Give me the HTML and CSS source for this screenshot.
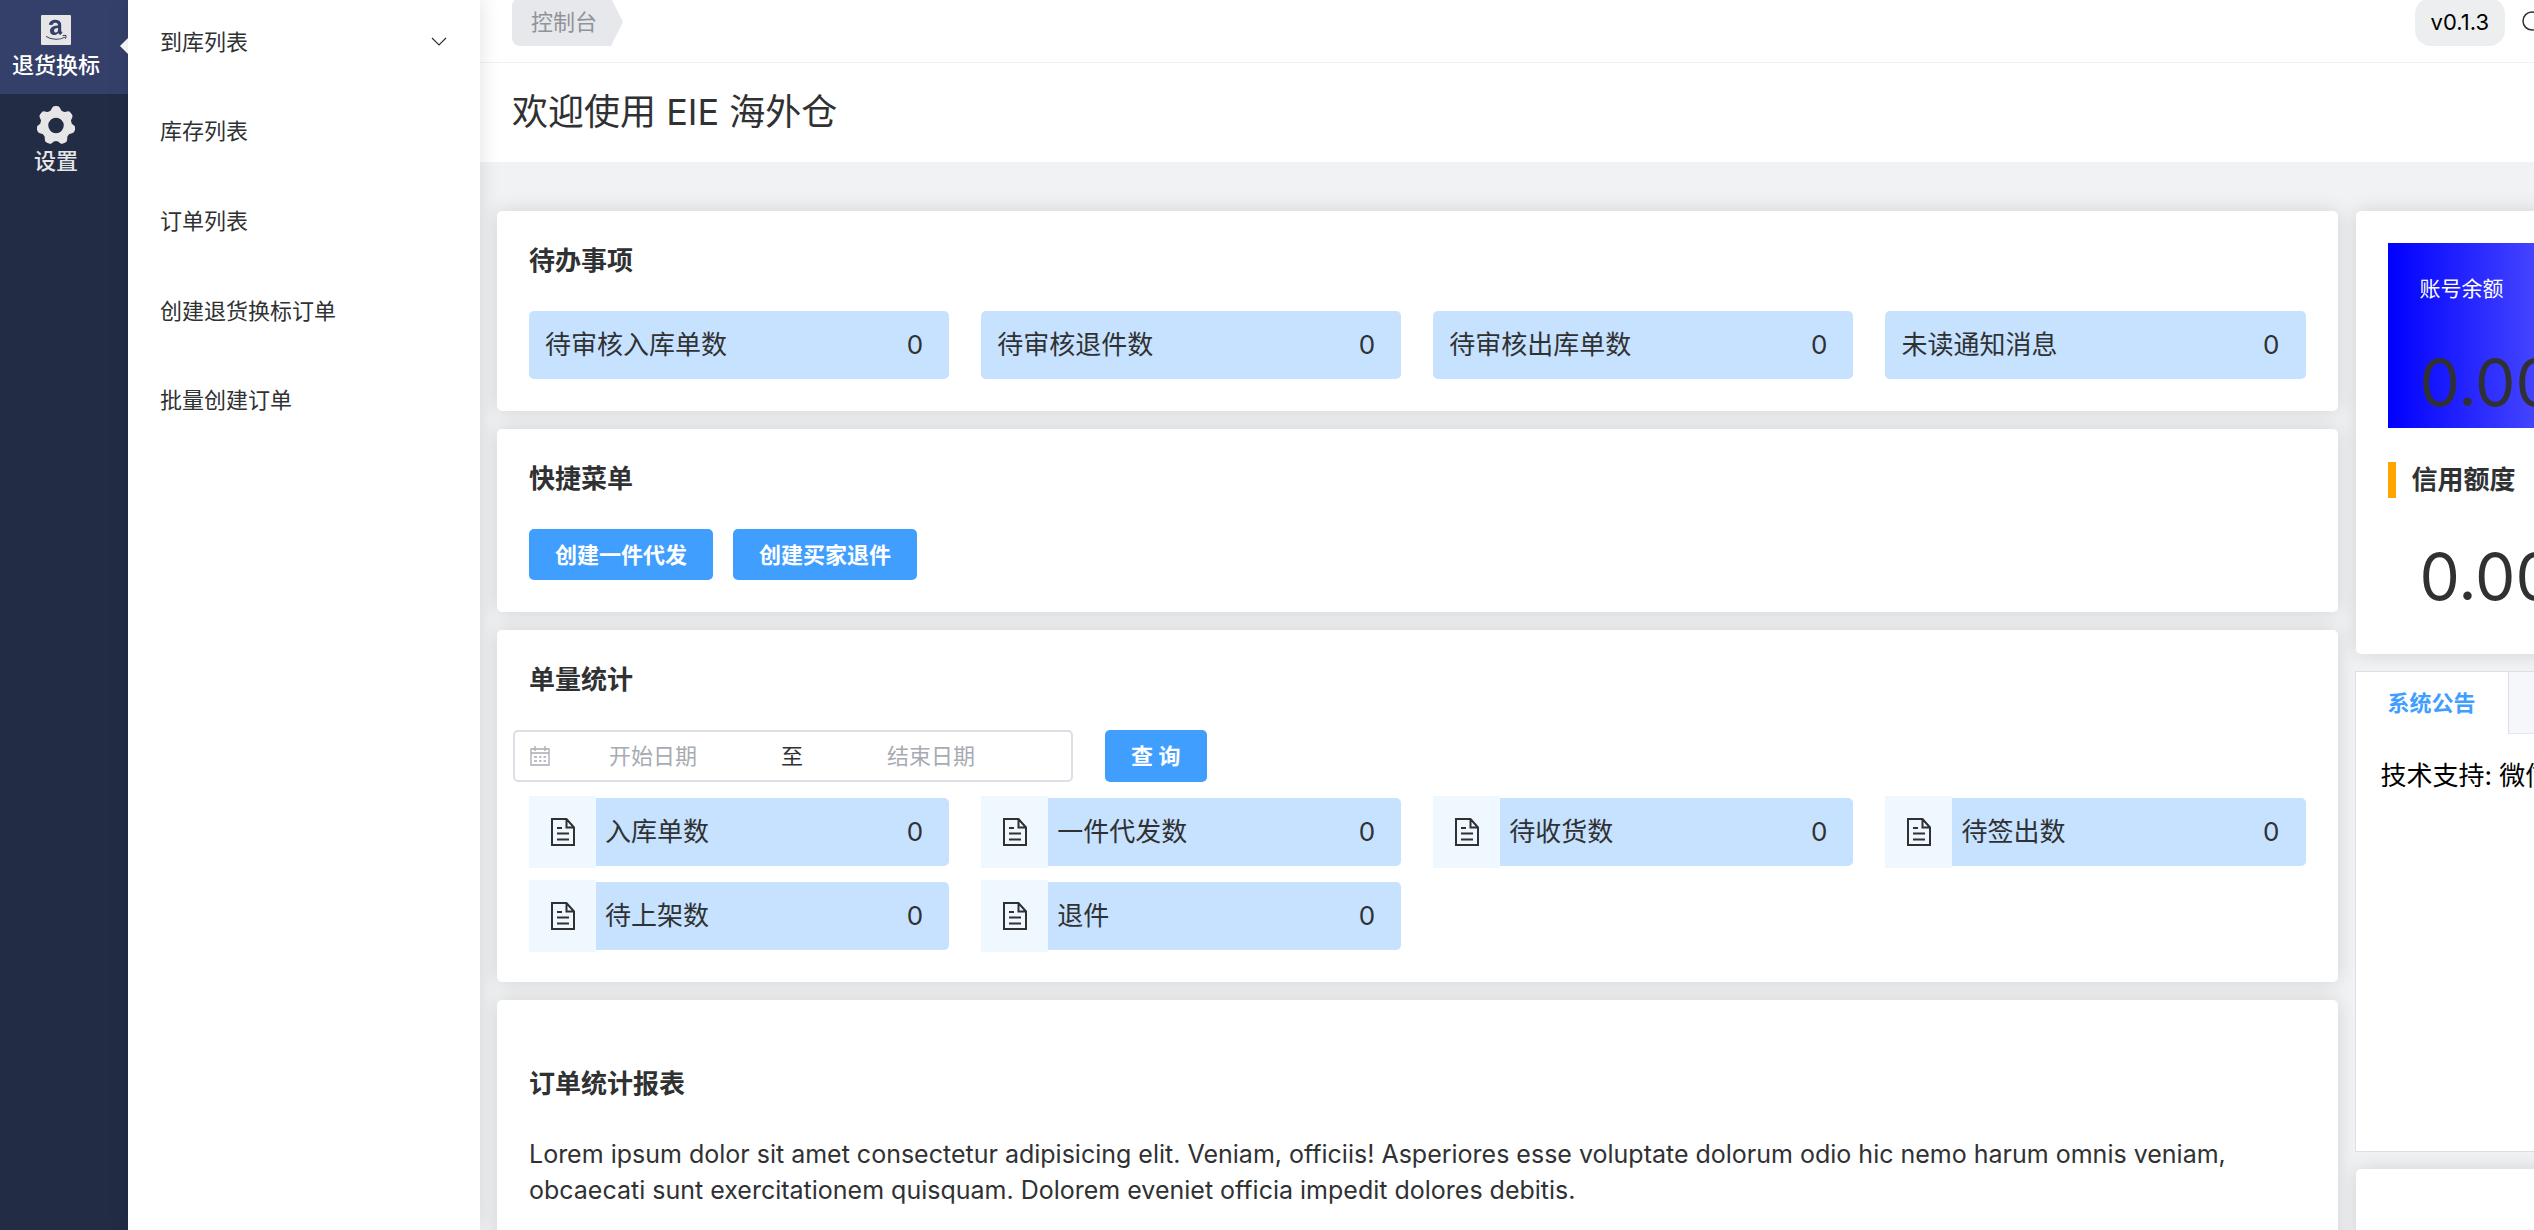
FILE: index.html
```html
<!DOCTYPE html>
<html lang="zh-CN">
<head>
<meta charset="utf-8">
<title>EIE 海外仓</title>
<link rel="stylesheet" href="styles.css">
</head>
<body>
<svg class="sprite" aria-hidden="true">
  <symbol id="doc" viewBox="0 0 24 28">
    <path d="M1 1H15.500L23 9.500V27H1ZM15.500 1V9.500H23M6 10H11M6 15.500H18M6 21.500H18" fill="none" stroke="currentColor" stroke-width="2"/>
  </symbol>
  <symbol id="tooth" viewBox="0 0 38 38">
    <path d="M12 8L15 2Q16 0 18 0H20Q22 0 23 2L26 8Z" fill="currentColor"/>
  </symbol>
</svg>
<div class="app">
  <nav class="rail">
    <a class="rail-item active" href="#">
      <svg class="rail-icon" width="30" height="30" viewBox="0 0 448 448"><rect width="448" height="448" rx="16" fill="currentColor"/><path transform="translate(18 -22) scale(.92)" fill="#34406a" d="M257.200 194.700c-45 1.700-131.200 14.300-131.200 88.300 0 79.500 100.200 82.800 133.100 31.400 5 7.700 25.700 27.100 33.200 33.800l37.200-36.900s-21.300-16.600-21.300-34.800V178.800c0-31.200-24.700-79.300-93.200-79.300-69 0-105.500 43-105.500 81.900l57 5.200c12.700-38.500 42.100-38.500 42.100-38.500 53.700 0 48.600 39.500 48.600 46.600zm0 70.500c0 61.800-64.900 52.500-64.900 13.500 0-36.300 38.700-43.500 64.900-44.200z"/><path fill="none" stroke="#34406a" stroke-width="15" d="M76 318C160 378 285 376 356 330M324 310Q356 298 374 310Q378 332 362 354"/></svg>
      <span>退货换标</span>
    </a>
    <a class="rail-item" href="#">
      <svg class="rail-icon" width="38" height="38" viewBox="0 0 38 38"><circle cx="19" cy="19.500" r="11.750" fill="none" stroke="currentColor" stroke-width="8"/><g id="teeth"><use href="#tooth" width="38" height="38"/><use href="#tooth" width="38" height="38" transform="rotate(51.430 19 19.500)"/><use href="#tooth" width="38" height="38" transform="rotate(102.860 19 19.500)"/><use href="#tooth" width="38" height="38" transform="rotate(154.290 19 19.500)"/><use href="#tooth" width="38" height="38" transform="rotate(205.710 19 19.500)"/><use href="#tooth" width="38" height="38" transform="rotate(257.140 19 19.500)"/><use href="#tooth" width="38" height="38" transform="rotate(308.570 19 19.500)"/></g></svg>
      <span>设置</span>
    </a>
  </nav>
  <nav class="submenu">
    <a href="#">到库列表<svg width="16" height="10" viewBox="0 0 16 10"><path d="M1 1L8 8L15 1" fill="none" stroke="currentColor" stroke-width="1.200"/></svg></a>
    <a href="#">库存列表</a>
    <a href="#">订单列表</a>
    <a href="#">创建退货换标订单</a>
    <a href="#">批量创建订单</a>
  </nav>
  <main class="main">
    <header class="topbar">
      <a class="crumb" href="#">控制台</a>
      <div class="tools">
        <span class="version">v0.1.3</span>
        <button class="search" type="button" aria-label="搜索"><svg width="24" height="24" viewBox="0 0 24 24"><path d="M10 2A9 9 0 1 0 10 20A9 9 0 1 0 10 2M17 17L23 23" fill="none" stroke="currentColor" stroke-width="1.500"/></svg></button>
      </div>
    </header>
    <h1 class="welcome">欢迎使用 EIE 海外仓</h1>
    <div class="board">
      <div class="col">
        <section class="card">
          <h2>待办事项</h2>
          <div class="tiles">
            <div class="tile"><span>待审核入库单数</span><span>0</span></div>
            <div class="tile"><span>待审核退件数</span><span>0</span></div>
            <div class="tile"><span>待审核出库单数</span><span>0</span></div>
            <div class="tile"><span>未读通知消息</span><span>0</span></div>
          </div>
        </section>
        <section class="card">
          <h2>快捷菜单</h2>
          <div class="actions">
            <button class="btn" type="button">创建一件代发</button>
            <button class="btn" type="button">创建买家退件</button>
          </div>
        </section>
        <section class="card">
          <h2>单量统计</h2>
          <form class="filter">
            <div class="range">
              <svg width="20" height="20" viewBox="0 0 20 20"><path d="M1 3H19V19H1ZM1 7H19M5 0V5M15 0V5M4 11H7M9 11H11.500M13.500 11H16M4 15H7M9 15H11.500M13.500 15H16" fill="none" stroke="currentColor" stroke-width="1.300"/></svg>
              <input type="text" placeholder="开始日期" aria-label="开始日期">
              <span class="to">至</span>
              <input type="text" placeholder="结束日期" aria-label="结束日期">
            </div>
            <button class="btn" type="button">查 询</button>
          </form>
          <div class="tiles">
            <div class="tile stat"><span class="mark"><svg width="24" height="28"><use href="#doc"/></svg></span><span>入库单数</span><span>0</span></div>
            <div class="tile stat"><span class="mark"><svg width="24" height="28"><use href="#doc"/></svg></span><span>一件代发数</span><span>0</span></div>
            <div class="tile stat"><span class="mark"><svg width="24" height="28"><use href="#doc"/></svg></span><span>待收货数</span><span>0</span></div>
            <div class="tile stat"><span class="mark"><svg width="24" height="28"><use href="#doc"/></svg></span><span>待签出数</span><span>0</span></div>
            <div class="tile stat"><span class="mark"><svg width="24" height="28"><use href="#doc"/></svg></span><span>待上架数</span><span>0</span></div>
            <div class="tile stat"><span class="mark"><svg width="24" height="28"><use href="#doc"/></svg></span><span>退件</span><span>0</span></div>
          </div>
        </section>
        <section class="card report">
          <h2>订单统计报表</h2>
          <p>Lorem ipsum dolor sit amet consectetur adipisicing elit. Veniam, officiis! Asperiores esse voluptate dolorum odio hic nemo harum omnis veniam, obcaecati sunt exercitationem quisquam. Dolorem eveniet officia impedit dolores debitis.</p>
        </section>
      </div>
      <aside class="col side">
        <section class="card">
          <div class="balance"><span>账号余额</span><strong class="amount">0.00</strong></div>
          <h2 class="credit">信用额度</h2>
          <strong class="amount">0.00</strong>
        </section>
        <section class="tabs">
          <div class="tab-head"><button class="tab" type="button">系统公告</button></div>
          <p>技术支持: 微信</p>
        </section>
        <section class="card"></section>
      </aside>
    </div>
  </main>
</div>
</body>
</html>
```
FILE: styles.css
```css
* { box-sizing: border-box; }
body {
  margin: 0;
  font: 22px/32px Inter, "Noto Sans CJK SC", sans-serif;
  color: #303133;
  background: #f0f2f4;
}
h1, h2, p { margin: 0; }
a { color: inherit; text-decoration: none; }
button, input { font: inherit; color: inherit; border: 0; background: none; padding: 0; }
svg { flex: none; display: block; }
.sprite { display: none; }
.app { display: flex; height: 100vh; overflow: hidden; }

.rail { flex: none; width: 128px; background: #222c45; color: #e6e6e6; }
.rail-item {
  position: relative;
  display: flex; flex-direction: column; align-items: center;
  gap: 4px; height: 94px; padding: 15px 16px 0 0;
  font-weight: 500;
}
.rail-item + .rail-item { padding-top: 12px; gap: 1px; }
.rail-item.active { background: #34406a; }
.rail-item.active span { color: #fff; }
.rail-item.active::after {
  content: ""; position: absolute; right: 0; top: 38px;
  border: 8px solid transparent; border-left: 0; border-right-color: #fff;
}

.submenu {
  position: relative; z-index: 1;
  flex: none; width: 352px; background: #fff;
  display: grid; grid-template-rows: repeat(5, 1fr) calc(100vh - 445px);
  margin-top: -3px;
  box-shadow: 0 0 20px rgba(0, 0, 0, .12);
}
.submenu a { display: flex; align-items: center; justify-content: space-between; padding: 0 33px 0 32px; }

.main { flex: 1; min-width: 0; overflow: hidden; }
.topbar {
  display: flex; align-items: center; justify-content: space-between;
  height: 63px; padding: 0 0 18px 32px;
  background: #fff; border-bottom: 1px solid #f0f2f5;
}
.crumb {
  height: 48px; padding: 0 26px 0 19px; line-height: 48px;
  color: #909399; background: #e6e8eb; border-radius: 8px 0 0 8px;
  clip-path: polygon(0 0, calc(100% - 12px) 0, 100% 50%, calc(100% - 12px) 100%, 0 100%);
}
.tools { display: flex; align-items: center; gap: 17px; margin-right: -12px; }
.version { height: 48px; padding: 0 16px; line-height: 48px; color: #000; background: #edeeef; border-radius: 16px; }
.welcome { padding: 24px 32px 25px; background: #fff; font-size: 36px; line-height: 50px; font-weight: 400; }

.board { display: grid; grid-template-columns: minmax(0, 9fr) minmax(0, 3fr); gap: 18px; margin: 49px -435px 0 17px; }
.col { display: flex; flex-direction: column; gap: 18px; }
.card { padding: 32px; background: #fff; border-radius: 5px; box-shadow: 0 0 20px rgba(0, 0, 0, .13); font-size: 26px; line-height: 36px; }
.card h2 { font-size: 26px; font-weight: 600; }
.tiles { display: grid; grid-template-columns: repeat(4, minmax(0, 1fr)); gap: 16px 32px; }
.tile { display: flex; align-items: center; justify-content: space-between; height: 68px; padding: 0 26px 0 16px; background: #c6e2ff; border-radius: 5px; }
h2 + .tiles, .actions, .filter { margin-top: 32px; }
.btn { height: 51px; padding: 0 26px; border-radius: 5px; background: #409eff; color: #fff; font-size: 22px; font-weight: 600; }
.actions { display: flex; gap: 20px; }
.filter { display: flex; gap: 32px; margin-left: -16px; margin-bottom: 16px; font-size: 22px; }
.filter .btn { height: 52px; }
.range { display: flex; align-items: center; width: 560px; height: 52px; padding: 0 15px; border: 2px solid #dcdfe6; border-radius: 5px; color: #a8abb2; }
.range input { flex: none; width: 206px; text-align: center; }
.range input::placeholder { color: #a8abb2; opacity: 1; }
.to { width: 72px; text-align: center; color: #303133; }
.stat { padding-left: 0; gap: 9px; }
.stat span:last-child { margin-left: auto; }
.mark { display: grid; place-items: center; width: 67px; height: 72px; background: #eff7ff; }
.report { padding-top: 66px; min-height: 400px; }
.report p { margin-top: 34px; font-size: 25px; }

.balance { display: flex; flex-direction: column; height: 185px; padding: 30px 32px 0; gap: 38px; background: linear-gradient(to right, #00f, #fff); color: #fff; font-size: 21px; line-height: 32px; }
.amount { display: block; font-size: 64px; line-height: 80px; font-weight: 400; color: #303133; }
.card .credit { margin-top: 34px; padding-left: 16px; border-left: 8px solid orange; }
.card > .amount { margin: 39px 0 -12px; padding-left: 32px; }
.side .card { min-height: 443px; }
.tabs { height: 481px; margin: -1px 0 -1px -1px; background: #fff; border: 1px solid #dcdfe6; font-size: 26px; color: #000; }
.tab-head { height: 62px; background: #f5f7fa; border-bottom: 1px solid #e4e7ed; }
.tab { height: 62px; padding: 0 32px; background: #fff; border-right: 1px solid #dcdfe6; color: #409eff; font-size: 22px; font-weight: 600; }
.tabs p { padding: 26px 25px; line-height: 32px; }
```
